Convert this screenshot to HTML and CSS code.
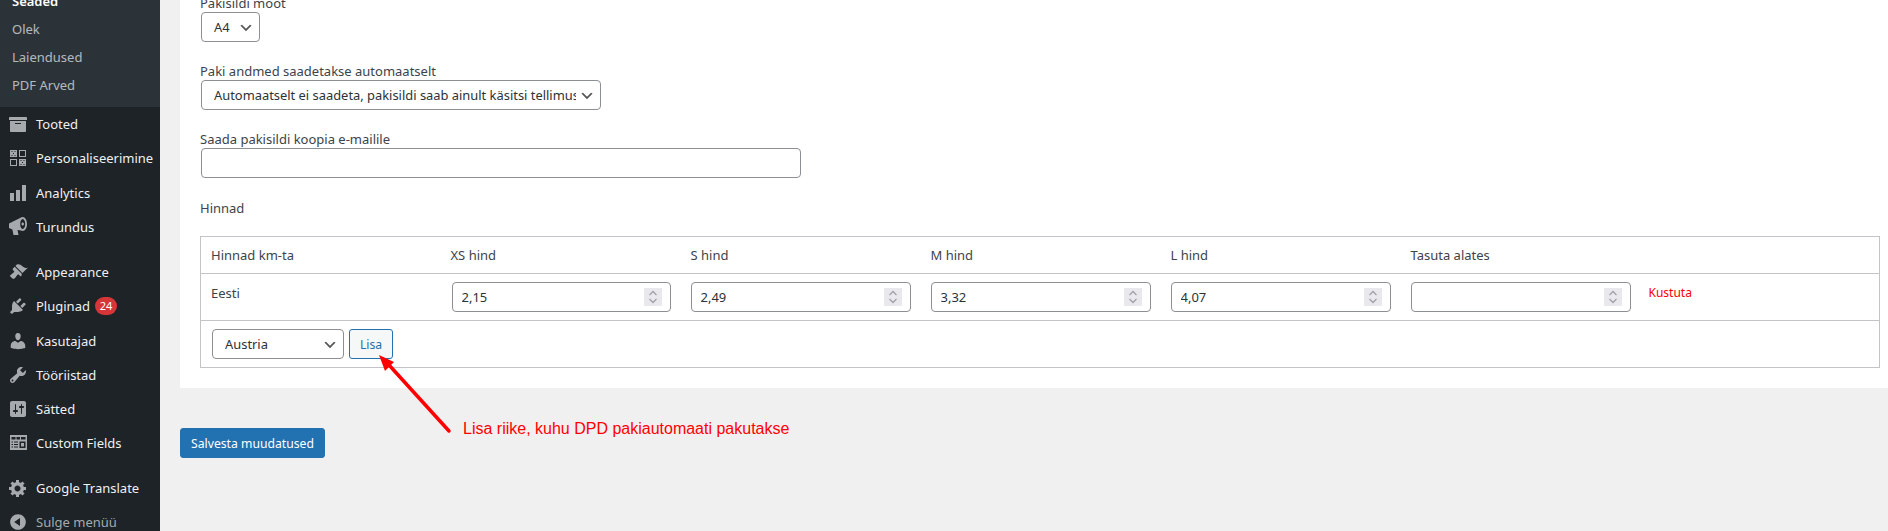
FILE: index.html
```html
<!DOCTYPE html>
<html lang="et">
<head>
    <meta charset="UTF-8">
    <meta name="viewport" content="width=device-width, initial-scale=1.0">
    <title>Pakiautomaadi seaded</title>
    <link rel="stylesheet" href="styles.css">
</head>
<body>
    <aside class="sidebar">
        <ul class="submenu">
            <li class="current">Seaded</li>
            <li>Olek</li>
            <li>Laiendused</li>
            <li>PDF Arved</li>
        </ul>
        <ul class="menu">
            <li><svg viewBox="0 0 20 20"><path d="M19 4v2H1V4c0-.55.45-1 1-1h16c.55 0 1 .45 1 1zM2 7h16v10c0 .55-.45 1-1 1H3c-.55 0-1-.45-1-1V7zm11 3V9H7v1h6z"/></svg>Tooted</li>
            <li><svg viewBox="0 0 20 20"><path fill-rule="evenodd" d="M2 2h7v7H2zm1.500 1v1h1V3zm3 0v1h1V3zM5 5v1h1V5zM3.500 7v1h1V7zm3 0v1h1V7zM11 2h7v7h-7zm1 1v5h5V3zM2 11h7v7H2zm1 1v5h5v-5zm8-1h7v7h-7zm1.500 1v1h1v-1zm3 0v1h1v-1zM14 14v1h1v-1zm-1.500 2v1h1v-1zm3 0v1h1v-1z"/></svg>Personaliseerimine</li>
            <li><svg viewBox="0 0 20 20"><path d="M18 18V2h-4v16h4zm-6 0V7H8v11h4zm-6 0v-8H2v8h4z"/></svg>Analytics</li>
            <li><svg viewBox="0 0 20 20"><path fill-rule="evenodd" d="M14.700 0c2.400 0 4.300 3.100 4.300 7s-1.900 7-4.300 7c-.6 0-1.100-.2-1.700-.5L9.500 13 10.500 18H5.500L4.400 12.400 1 11V6.500L12.500.8C13.100.3 13.900 0 14.700 0zm0 2c-1.400 0-2.500 2.200-2.500 5s1.100 5 2.500 5 2.500-2.200 2.500-5-1.100-5-2.500-5zm0 3.500c.7 0 1.300.7 1.300 1.500s-.6 1.500-1.300 1.500-1.300-.7-1.300-1.500.6-1.500 1.300-1.500z"/></svg>Turundus</li>
            <li class="sep"><svg viewBox="0 0 20 20"><path d="M14.480 11.060L7.410 3.990l1.500-1.500c.5-.56 2.300-.47 3.510.32 1.210.8 1.430 1.280 2.910 2.100 1.180.64 2.450 1.260 4.450.85zm-.71.71L6.700 4.700 4.930 6.470c-.39.39-.39 1.020 0 1.410l1.060 1.060c.39.39.39 1.030 0 1.420-.6.6-1.430 1.110-2.210 1.690-.35.26-.7.53-1.010.84C1.430 13.230 1.980 14.100 3.380 15.500c1.410 1.410 2.280 1.960 3.650.59.31-.31.58-.66.84-1.010.58-.78 1.090-1.610 1.690-2.210.39-.39 1.030-.39 1.420 0l1.060 1.060c.39.39 1.020.39 1.410 0z"/></svg>Appearance</li>
            <li><svg viewBox="0 0 20 20"><path d="M13.110 4.360L9.870 7.600 8 5.730l3.240-3.240c.35-.34 1.050-.2 1.560.32.52.51.66 1.210.31 1.550zm-8 1.770l.91-1.120 9.010 9.010-1.190.84c-.71.71-2.630 1.160-3.820 1.160H6.140L4.900 17.260c-.59.59-1.540.59-2.120 0-.59-.58-.59-1.530 0-2.120l1.240-1.240v-3.880c0-1.130.4-3.190 1.090-3.890zm7.260 3.970l3.240-3.240c.34-.35 1.040-.21 1.550.31.52.51.66 1.210.31 1.550l-3.240 3.250z"/></svg>Pluginad<span class="badge">24</span></li>
            <li><svg viewBox="0 0 20 20"><path d="M10 9.250c-2.270 0-2.730-3.440-2.730-3.440C7 4.020 7.820 2 9.970 2c2.160 0 2.980 2.020 2.710 3.810 0 0-.41 3.440-2.680 3.440zm0 2.570L12.720 10c2.390 0 4.520 2.330 4.520 4.530v2.490s-3.650 1.130-7.240 1.130c-3.650 0-7.240-1.130-7.240-1.130v-2.490c0-2.250 1.940-4.480 4.470-4.480z"/></svg>Kasutajad</li>
            <li><svg viewBox="0 0 20 20"><path d="M16.680 9.770c-1.340 1.340-3.300 1.670-4.950.99l-5.410 6.520c-.99.99-2.590.99-3.580 0s-.99-2.590 0-3.570l6.520-5.420c-.68-1.650-.35-3.610.99-4.950 1.280-1.280 3.120-1.620 4.720-1.060l-2.890 2.890 2.820 2.820 2.860-2.870c.53 1.580.18 3.390-1.080 4.650zM3.810 16.210c.4.39 1.040.39 1.430 0 .4-.4.4-1.040 0-1.430-.39-.4-1.030-.4-1.430 0-.39.39-.39 1.030 0 1.430z"/></svg>Tööriistad</li>
            <li><svg viewBox="0 0 20 20"><path fill-rule="evenodd" d="M18 16V4c0-1.100-.9-2-2-2H4c-1.100 0-2 .9-2 2v12c0 1.100.9 2 2 2h12c1.100 0 2-.9 2-2zM8 11h1c.55 0 1 .45 1 1s-.45 1-1 1H8v1.500c0 .28-.22.5-.5.5s-.5-.22-.5-.5V13H6c-.55 0-1-.45-1-1s.45-1 1-1h1V5.500c0-.28.22-.5.5-.5s.5.22.5.5V11zm5-2h-1c-.55 0-1-.45-1-1s.45-1 1-1h1V5.500c0-.28.22-.5.5-.5s.5.22.5.5V7h1c.55 0 1 .45 1 1s-.45 1-1 1h-1v5.500c0 .28-.22.5-.5.5s-.5-.22-.5-.5V9z"/></svg>Sätted</li>
            <li><svg viewBox="0 0 20 20"><path fill-rule="evenodd" d="M2 2h17v15H2zm1.500 2v2.500h4V4zm5 0v2.500h3.500V4zm4.500 0v2.500h4.500V4zM3.500 8.500v1H5v-1zm2.500 0v1h4v-1zM3.500 11v1H5v-1zm2.500 0v1h4v-1zm-2.500 2.500v1H5v-1zm2.500 0v1h4v-1zM11.500 8.500V15h6V8.500zm1.500 1.500h3v3.500h-3z"/></svg>Custom Fields</li>
            <li class="sep sep-short"><svg viewBox="0 0 20 20"><path fill-rule="evenodd" d="M18 12h-2.180c-.17.7-.44 1.350-.81 1.930l1.540 1.540-2.100 2.100-1.540-1.540c-.58.36-1.230.63-1.910.79V19H8v-2.180c-.68-.16-1.330-.43-1.910-.79l-1.540 1.540-2.120-2.120 1.540-1.540c-.36-.58-.63-1.230-.79-1.910H1V9.030h2.170c.16-.7.44-1.350.8-1.940L2.430 5.550l2.100-2.100 1.540 1.540c.58-.37 1.240-.64 1.930-.81V2h3v2.180c.68.16 1.330.43 1.910.79l1.540-1.540 2.120 2.120-1.540 1.540c.36.59.64 1.240.8 1.940H18V12zm-8.500 1.500c1.660 0 3-1.340 3-3s-1.340-3-3-3-3 1.340-3 3 1.340 3 3 3z"/></svg>Google Translate</li>
            <li class="collapse"><svg viewBox="0 0 20 20"><path fill-rule="evenodd" d="M10 2.160c4.330 0 7.840 3.510 7.840 7.840s-3.510 7.840-7.840 7.840S2.160 14.330 2.160 10 5.710 2.160 10 2.160zm2 11.720V6.120L6.180 9.970z"/></svg>Sulge menüü</li>
        </ul>
    </aside>

    <main class="content">
        <form class="panel">
            <div class="field">
                <label>Pakisildi moot</label>
                <select class="select select-small"><option>A4</option></select>
            </div>
            <div class="field">
                <label>Paki andmed saadetakse automaatselt</label>
                <select class="select select-wide"><option>Automaatselt ei saadeta, pakisildi saab ainult käsitsi tellimusel</option></select>
            </div>
            <div class="field">
                <label>Saada pakisildi koopia e-mailile</label>
                <input type="text" class="text-input">
            </div>
            <div class="field field-title">
                <label>Hinnad</label>
            </div>

            <table class="prices">
                <tr>
                    <th>Hinnad km-ta</th>
                    <th>XS hind</th>
                    <th>S hind</th>
                    <th>M hind</th>
                    <th>L hind</th>
                    <th>Tasuta alates</th>
                    <th></th>
                </tr>
                <tr>
                    <td class="top">Eesti</td>
                    <td><div class="num num-first"><input type="text" value="2,15"><span class="spin"><svg viewBox="0 0 18 18"><path d="M5.500 7L9 3.500 12.500 7M5.500 11L9 14.500 12.500 11"/></svg></span></div></td>
                    <td><div class="num"><input type="text" value="2,49"><span class="spin"><svg viewBox="0 0 18 18"><path d="M5.500 7L9 3.500 12.500 7M5.500 11L9 14.500 12.500 11"/></svg></span></div></td>
                    <td><div class="num"><input type="text" value="3,32"><span class="spin"><svg viewBox="0 0 18 18"><path d="M5.500 7L9 3.500 12.500 7M5.500 11L9 14.500 12.500 11"/></svg></span></div></td>
                    <td><div class="num"><input type="text" value="4,07"><span class="spin"><svg viewBox="0 0 18 18"><path d="M5.500 7L9 3.500 12.500 7M5.500 11L9 14.500 12.500 11"/></svg></span></div></td>
                    <td><div class="num"><input type="text"><span class="spin"><svg viewBox="0 0 18 18"><path d="M5.500 7L9 3.500 12.500 7M5.500 11L9 14.500 12.500 11"/></svg></span></div></td>
                    <td class="top delete">Kustuta</td>
                </tr>
                <tr>
                    <td colspan="7">
                        <div class="add-row">
                            <select class="select select-country"><option>Austria</option></select>
                            <button type="button" class="btn-secondary">Lisa</button>
                        </div>
                    </td>
                </tr>
            </table>
        </form>
        <button type="button" class="btn-primary">Salvesta muudatused</button>
    </main>

    <svg class="arrow" viewBox="0 0 100 100" width="100" height="100"><path class="arrow-line" d="M92 88L32 22"/><path class="arrow-head" d="M22 12L37 19 28 28z"/></svg>
    <div class="note">Lisa riike, kuhu DPD pakiautomaati pakutakse</div>
</body>
</html>
```

FILE: styles.css
```css
* {
    box-sizing: border-box;
}

html, body {
    height: 531px;
    overflow: hidden;
}

body {
    font-family: "Noto Sans", Arial, sans-serif;
    font-size: 13px;
    line-height: 18px;
    color: #3c434a;
    margin: 0;
    background-color: #f0f0f1;
    display: flex;
    position: relative;
}

/* sidebar */
.sidebar {
    width: 160px;
    flex-shrink: 0;
    background-color: #1d2327;
    overflow: hidden;
}

.sidebar ul {
    list-style: none;
    margin: 0;
    padding: 0;
}

.submenu {
    background-color: #2c3338;
    margin-top: -13px !important;
    padding-bottom: 8px !important;
}

.submenu li {
    height: 28px;
    line-height: 28px;
    padding-left: 12px;
    color: rgba(240, 246, 252, 0.7);
}

.submenu .current {
    color: #fff;
    font-weight: 600;
}

.menu li {
    height: 34.25px;
    display: flex;
    align-items: center;
    color: #f0f0f1;
}

.menu li.sep {
    margin-top: 11px;
}

.menu li.sep-short {
    margin-top: 10px;
}

.menu svg {
    width: 20px;
    height: 20px;
    margin: 0 8px;
    fill: #a7aaad;
    flex-shrink: 0;
}

.menu .collapse {
    color: #a7aaad;
}

.badge {
    width: 22px;
    height: 18px;
    margin-left: 5px;
    border-radius: 9px;
    background-color: #d63638;
    color: #fff;
    font-size: 11px;
    line-height: 18px;
    text-align: center;
}

/* content */
.content {
    flex: 1;
    padding-left: 20px;
}

.panel {
    background-color: #fff;
    margin-top: -6px;
    padding: 0 8px 20px 20px;
}

.field {
    margin-bottom: 20px;
}

.field-title {
    padding-top: 1px;
    margin-bottom: 19px;
}

.field label {
    display: block;
    height: 18px;
}

.select {
    display: block;
    appearance: none;
    height: 30px;
    margin: 0 1px;
    padding: 0 24px 0 12px;
    font-family: inherit;
    font-size: 12.9px;
    color: #2c3338;
    border: 1px solid #8c8f94;
    border-radius: 4px;
    background: #fff url('data:image/svg+xml;charset=utf-8,<svg xmlns="http://www.w3.org/2000/svg" width="20" height="20"><path d="M5 6l5 5 5-5 2 1-7 7-7-7z" fill="%23555"/></svg>') no-repeat right 5px top 55%;
    background-size: 16px 16px;
}

.select-small {
    width: 59px;
}

.select-wide {
    width: 400px;
}

.select-country {
    width: 132px;
    margin: 0;
}

.text-input {
    display: block;
    width: 600px;
    height: 30px;
    margin: 0 1px;
    border: 1px solid #8c8f94;
    border-radius: 4px;
}

/* price table */
.prices {
    width: 1680px;
    table-layout: fixed;
    border-collapse: collapse;
    border: 1px solid #c3c4c7;
}

.prices th {
    width: 240px;
    height: 37px;
    padding: 0 10px;
    font-weight: 400;
    text-align: left;
}

.prices th:last-child {
    width: auto;
}

.prices td {
    padding: 8px 10px;
    border-top: 1px solid #c3c4c7;
}

.prices .top {
    vertical-align: top;
    padding-top: 10px;
}

.prices .delete {
    color: #f00;
    font-size: 12px;
    padding-left: 8px;
}

.num {
    display: flex;
    align-items: center;
    width: 220px;
    height: 30px;
    padding: 0 8px 0 9px;
    border: 1px solid #8c8f94;
    border-radius: 4px;
    background-color: #fff;
}

.num-first {
    width: 219px;
    margin-left: 1px;
}

.num input {
    flex: 1;
    min-width: 0;
    border: none;
    padding: 0;
    outline: none;
    font-family: inherit;
    font-size: 13px;
    color: #2c3338;
}

.spin {
    width: 18px;
    height: 18px;
    background-color: #e9e9ed;
}

.spin svg {
    display: block;
    width: 18px;
    height: 18px;
    fill: none;
    stroke: #a0a0a8;
    stroke-width: 1.300;
}

.add-row {
    display: flex;
    gap: 5px;
    padding-left: 1px;
}

.btn-secondary {
    width: 44px;
    height: 30px;
    padding: 0;
    font-family: inherit;
    font-size: 12.2px;
    color: #2271b1;
    background-color: #f6f7f7;
    border: 1px solid #2271b1;
    border-radius: 3px;
}

.btn-primary {
    display: block;
    width: 145px;
    height: 30px;
    margin-top: 40px;
    padding: 0;
    font-family: inherit;
    font-size: 12.2px;
    color: #fff;
    background-color: #2271b1;
    border: 1px solid #2271b1;
    border-radius: 3px;
}

/* annotation drawn over the page */
.arrow {
    position: absolute;
    left: 357px;
    top: 343px;
}

.arrow-line {
    fill: none;
    stroke: #f00;
    stroke-width: 3.5;
    stroke-linecap: round;
}

.arrow-head {
    fill: #f00;
}

.note {
    position: absolute;
    left: 463px;
    top: 419px;
    font-family: "Liberation Sans", Arial, sans-serif;
    font-size: 16px;
    line-height: 20px;
    color: #f00;
}
```
